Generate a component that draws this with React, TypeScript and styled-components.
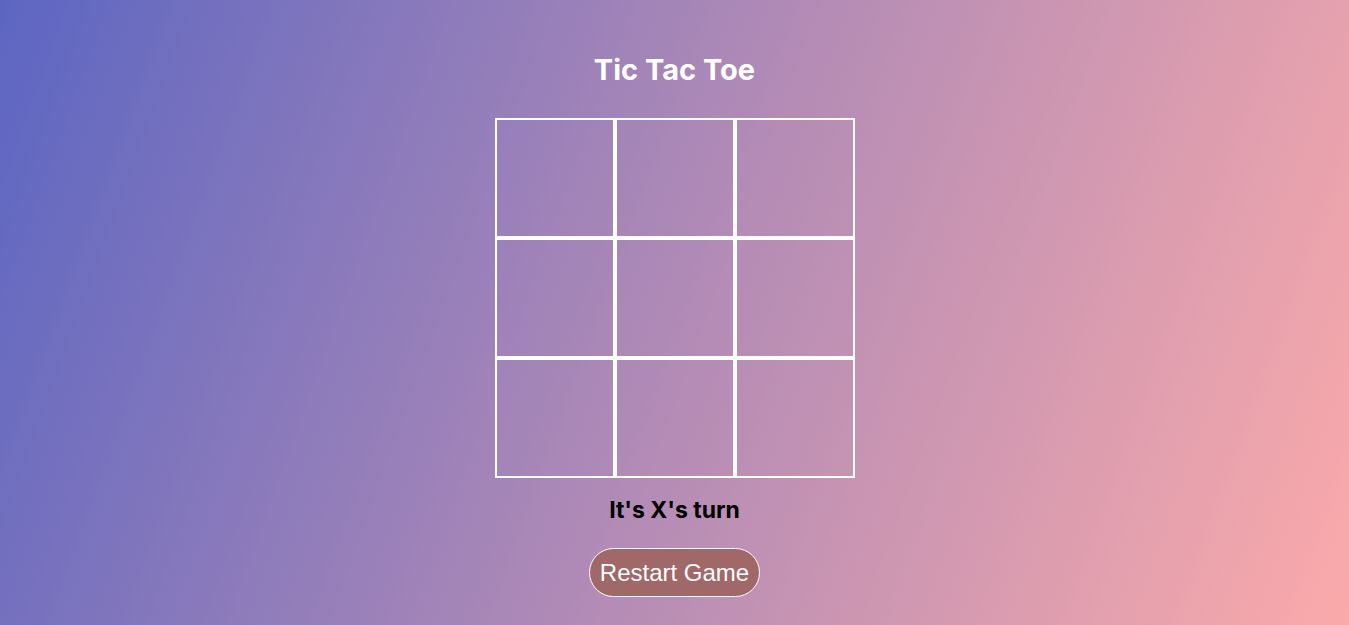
import React, { FC, useState } from 'react';
import styled, { createGlobalStyle } from 'styled-components';

const GlobalStyle = createGlobalStyle`
  html, body {
    margin: 0;
    padding: 0;
    height: 100%;
  }
  body {
    font-family: "Inter", "Liberation Sans", sans-serif;
  }
  #root {
    height: 100%;
  }
`;

const Page = styled.div`
  min-height: 625px;
  display: flex;
  flex-direction: column;
  align-items: center;
  background: linear-gradient(110deg, #5c66c2 0%, #b08ab6 50%, #fbaaaa 100%);
  box-sizing: border-box;
  padding-top: 51px;
`;

const Title = styled.h1`
  margin: 0 0 29px;
  font-family: "Inter", "Open Sans", sans-serif;
  font-size: 29px;
  font-weight: 700;
  line-height: 38px;
  color: #ffffff;
`;

const Board = styled.div`
  display: grid;
  grid-template-columns: repeat(3, 120px);
  grid-template-rows: repeat(3, 120px);
`;

const Cell = styled.button`
  box-sizing: border-box;
  width: 120px;
  height: 120px;
  border: 2px solid #ffffff;
  background: transparent;
  padding: 0;
  font-family: "Inter", sans-serif;
  font-size: 60px;
  font-weight: 700;
  color: #ffffff;
  cursor: pointer;
`;

const Status = styled.h2`
  margin: 17px 0 23px;
  font-family: "Inter", "Open Sans", sans-serif;
  font-size: 23px;
  font-weight: 700;
  line-height: 30px;
  color: #000000;
`;

const RestartButton = styled.button`
  box-sizing: border-box;
  width: 171px;
  height: 49px;
  border: 1px solid #ffffff;
  border-radius: 25px;
  background: #a06868;
  color: #ffffff;
  font-family: "Liberation Sans", Arial, sans-serif;
  font-size: 24px;
  cursor: pointer;
`;

const App: FC = () => {
  const [cells, setCells] = useState<string[]>(Array(9).fill(''));
  const [turn, setTurn] = useState('X');

  const play = (i: number) => {
    if (cells[i]) return;
    const next = [...cells];
    next[i] = turn;
    setCells(next);
    setTurn(turn === 'X' ? 'O' : 'X');
  };

  const restart = () => {
    setCells(Array(9).fill(''));
    setTurn('X');
  };

  return (
    <Page>
      <GlobalStyle />
      <Title>Tic Tac Toe</Title>
      <Board>
        {cells.map((c, i) => (
          <Cell key={i} onClick={() => play(i)}>{c}</Cell>
        ))}
      </Board>
      <Status>It's {turn}'s turn</Status>
      <RestartButton onClick={restart}>Restart Game</RestartButton>
    </Page>
  );
};

export default App;
